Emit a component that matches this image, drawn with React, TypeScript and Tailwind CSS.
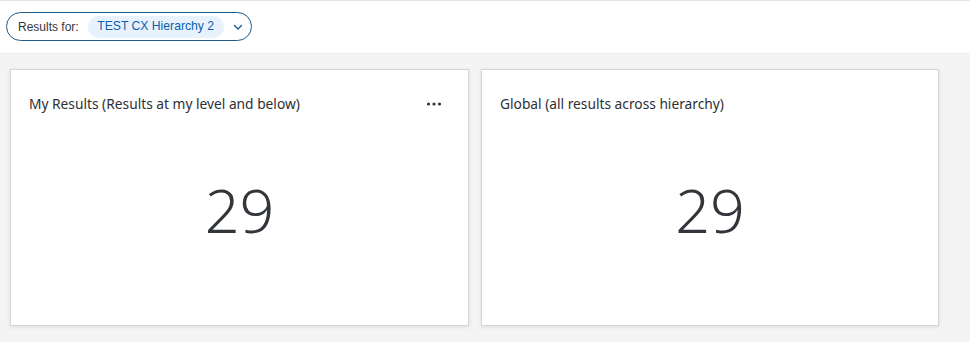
import React from "react";

export default function App() {
  return (
    <div className="w-[970px] h-[342px] bg-[#f4f4f4] overflow-hidden" style={{ fontFamily: '"Liberation Sans", Arial, sans-serif' }}>
      <div className="h-[54px] bg-white border-t border-[#e5e5e5] border-b border-b-[#ececec] flex items-center pl-[6px]">
        <div className="h-[29px] mt-[-1px] flex items-center rounded-full border border-[#1d5b8c] pl-[11px] pr-[7px]">
          <span className="text-[12px] text-[#32363a]">Results for:</span>
          <span className="ml-[9px] h-[22px] px-[9.5px] flex items-center rounded-full bg-[#e8f2fc] text-[12.2px] text-[#0a5fae]">TEST CX Hierarchy 2</span>
          <svg className="ml-[8px]" width="12" height="12" viewBox="0 0 12 12" fill="none">
            <path d="M2.5 4.5 L6 8 L9.5 4.5" stroke="#1d5b8c" strokeWidth="1.4" strokeLinecap="round" strokeLinejoin="round" />
          </svg>
        </div>
      </div>
      <div className="flex gap-[12px] pl-[10px] pt-[15px]">
        <Card w="w-[459px]" title="My Results (Results at my level and below)" value="29" menu />
        <Card w="w-[458px]" title="Global (all results across hierarchy)" value="29" />
      </div>
    </div>
  );
}

function Card({ title, value, menu, w }: { title: string; value: string; menu?: boolean; w: string }) {
  return (
    <div className={`${w} h-[257px] bg-white border border-[#d6d6d6] shadow-[0_1px_4px_rgba(0,0,0,0.1)] flex flex-col`}>
      <div className="flex items-center justify-between pl-[18px] pr-[26px] pt-[24px] h-[44px]">
        <span className="text-[13.75px] text-[#2d3034]" style={{ fontFamily: '"Noto Sans", "Liberation Sans", sans-serif' }}>{title}</span>
        {menu && (
          <svg width="16" height="4" viewBox="0 0 16 4">
            <circle cx="2.5" cy="2" r="1.6" fill="#32363a" />
            <circle cx="8" cy="2" r="1.6" fill="#32363a" />
            <circle cx="13.5" cy="2" r="1.6" fill="#32363a" />
          </svg>
        )}
      </div>
      <div className="flex-1 flex items-center justify-center pb-[20px]">
        <span className="text-[61px] font-light leading-none text-[#32363a]" style={{ fontFamily: '"Noto Sans", "Liberation Sans", sans-serif' }}>{value}</span>
      </div>
    </div>
  );
}
